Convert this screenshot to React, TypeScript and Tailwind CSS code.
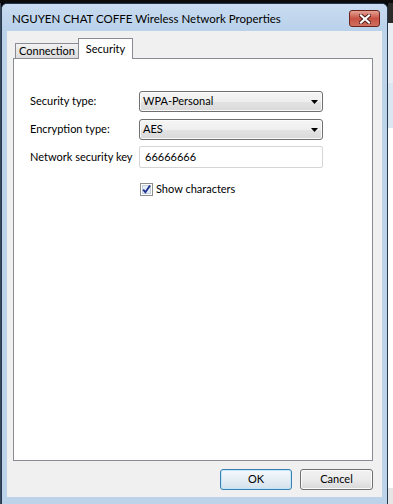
import React from "react";

const DropArrow = () => (
  <svg width="7" height="4" viewBox="0 0 7 4">
    <path d="M0 0h7L3.5 4z" fill="#000" />
  </svg>
);

const ComboBox = ({ value }: { value: string }) => (
  <div className="flex h-[21px] w-[184px] items-center justify-between rounded-[3px] border border-[#707070] bg-[linear-gradient(#f5f5f5,#eeeeee_50%,#e3e3e3_51%,#d9d9d9)] pl-[3px] pr-[4px] shadow-[inset_0_0_0_1px_#fafafa]">
    <span>{value}</span>
    <DropArrow />
  </div>
);

const Field = ({ label, children }: { label: string; children: React.ReactNode }) => (
  <div className="flex items-center">
    <span className="w-[109px] shrink-0 whitespace-nowrap">{label}</span>
    {children}
  </div>
);

const App = () => {
  return (
    <div className="flex h-[504px] w-[393px] flex-col overflow-hidden bg-black font-['Lato','Liberation_Sans',sans-serif] text-[11px] text-black">
      <div className="h-[3px] shrink-0 bg-[#0c0c0c]" />
      <div className="flex min-h-0 flex-1">
        <div className="w-[1px] bg-[#3a4a5c]" />
        {/* dialog window */}
        <div className="flex w-[387px] flex-col rounded-t-[6px] border-x border-t border-[#25384e] bg-[#bcd3ea]">
          {/* title bar */}
          <div className="flex h-[27px] shrink-0 items-center justify-between rounded-t-[5px] bg-gradient-to-b from-[#c9dcf0] to-[#b9d1ea] pl-[10px] pr-[7px] pt-[2px]">
            <span className="text-[11.5px] text-black">NGUYEN CHAT COFFE Wireless Network Properties</span>
            <div className="flex h-[17px] w-[31px] items-center justify-center rounded-[3px] border border-[#6b231c] bg-gradient-to-b from-[#e3a296] via-[#c75244] to-[#d0705f]">
              <svg width="12" height="10" viewBox="0 0 12 10">
                <path d="M2 1.5l8 7M10 1.5l-8 7" stroke="#4a1a14" strokeWidth="4" strokeLinecap="square" />
                <path d="M2 1.5l8 7M10 1.5l-8 7" stroke="#fff" strokeWidth="2.2" strokeLinecap="square" />
              </svg>
            </div>
          </div>
          {/* client area */}
          <div className="mx-[5px] flex h-[466px] shrink-0 flex-col bg-[#f0f0f0] pl-[6px] pr-[7px] pt-[7px]">
            {/* tabs */}
            <div className="flex h-[20px] items-end pl-[2px]">
              <div className="flex h-[15px] w-[64px] items-center justify-center whitespace-nowrap border-x border-t border-[#898c95] bg-gradient-to-b from-[#f2f2f2] to-[#dcdcdc] pt-[1px]">
                Connection
              </div>
              <div className="relative z-10 -mb-[1px] -ml-[1px] flex h-[21px] w-[55px] items-start justify-center border-x border-t border-[#898c95] bg-white pt-[2px]">
                Security
              </div>
            </div>
            {/* tab panel */}
            <div className="flex h-[403px] w-[360px] flex-col border border-[#898c95] bg-white pl-[16px] pt-[32px]">
              <Field label="Security type:">
                <ComboBox value="WPA-Personal" />
              </Field>
              <div className="mt-[7px]">
                <Field label="Encryption type:">
                  <ComboBox value="AES" />
                </Field>
              </div>
              <div className="mt-[6px]">
                <Field label="Network security key">
                  <div className="flex h-[22px] w-[184px] items-center rounded-[2px] border border-[#d5d5d5] bg-white pl-[5px]">
                    66666666
                  </div>
                </Field>
              </div>
              <div className="mt-[13px] flex items-center pl-[110px]">
                <svg width="13" height="13" viewBox="0 0 13 13" className="shrink-0">
                  <rect x="0.5" y="0.5" width="12" height="12" fill="#fff" stroke="#8e8f8f" />
                  <rect x="2.5" y="2.5" width="8" height="8" fill="#e4eef8" stroke="#c2cfdd" />
                  <path d="M3.2 6.6l2.2 2.6L10 2.6" fill="none" stroke="#1c2f8e" strokeWidth="1.8" />
                </svg>
                <span className="ml-[3px]">Show characters</span>
              </div>
            </div>
            {/* buttons */}
            <div className="mt-[8px] flex w-[360px] justify-end gap-[8px]">
              <div className="flex h-[21px] w-[72px] items-center justify-center rounded-[3px] border border-[#3c7fb1] bg-gradient-to-b from-[#f4f9fc] via-[#e6eef4] to-[#d3e1ec] shadow-[inset_0_0_0_1px_#bfe6fa]">
                OK
              </div>
              <div className="flex h-[21px] w-[73px] items-center justify-center rounded-[3px] border border-[#707070] bg-gradient-to-b from-[#f2f2f2] via-[#ebebeb] to-[#d8d8d8] shadow-[inset_0_0_0_1px_#fbfbfb]">
                Cancel
              </div>
            </div>
          </div>
        </div>
        {/* background window on the right */}
        <div className="flex flex-1 flex-col bg-white">
          <div className="h-[20px] bg-[#2b2b2b]" />
          <div className="h-[60px] bg-[#e9eef4]" />
          <div className="h-[45px] bg-[#dbe6f3]" />
          <div className="flex-1 bg-white" />
          <div className="h-[16px] bg-[#e6e6e6]" />
        </div>
      </div>
    </div>
  );
};

export default App;
